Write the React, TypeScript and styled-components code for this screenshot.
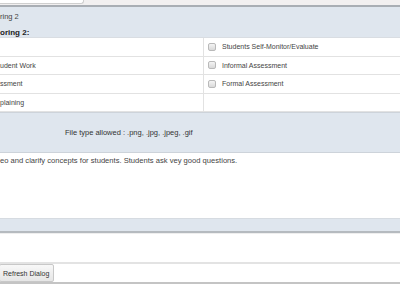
import React from "react";
import styled, { createGlobalStyle } from "styled-components";

const GlobalStyle = createGlobalStyle`
  body {
    margin: 0;
    background: #fff;
    font-family: "Liberation Sans", Arial, sans-serif;
    color: #333;
  }
`;

const rows = [
  { left: "", right: "Students Self-Monitor/Evaluate" },
  { left: "udent Work", right: "Informal Assessment" },
  { left: "ssment", right: "Formal Assessment" },
  { left: "plaining", right: "" },
];

const App: React.FC = () => {
  return (
    <Page>
      <GlobalStyle />
      <TopStrip>
        <Tab />
      </TopStrip>
      <Header>
        <HeaderLine>ring 2</HeaderLine>
        <HeaderLine bold>oring 2:</HeaderLine>
      </Header>
      <Table>
        {rows.map((r, i) => (
          <Row key={i}>
            <Cell>{r.left}</Cell>
            <Cell divided>
              {r.right && (
                <>
                  <Check />
                  <span>{r.right}</span>
                </>
              )}
            </Cell>
          </Row>
        ))}
      </Table>
      <Upload>
        <UploadNote>File type allowed : .png, .jpg, .jpeg, .gif</UploadNote>
      </Upload>
      <Comment>eo and clarify concepts for students. Students ask vey good questions.</Comment>
      <Band />
      <Blank />
      <Buttons>
        <Button>Refresh Dialog</Button>
      </Buttons>
    </Page>
  );
};

export default App;

const Page = styled.div`
  width: 400px;
  height: 284px;
  overflow: hidden;
  font-size: 7px;
`;

const TopStrip = styled.div`
  height: 5px;
  background: #f2f0f0;
  border-bottom: 2px solid #a9aeb4;
`;

const Tab = styled.div`
  width: 83px;
  height: 3px;
  background: #fff;
  border-right: 1px solid #cfcfcf;
  border-bottom: 1px solid #cfcfcf;
  border-bottom-right-radius: 3px;
`;

const Header = styled.div`
  height: 30px;
  background: #dfe6ee;
  display: flex;
  flex-direction: column;
  gap: 7px;
  padding-top: 5px;
  box-sizing: border-box;
`;

const HeaderLine = styled.div<{ bold?: boolean }>`
  font-size: ${(p) => (p.bold ? "8px" : "7.5px")};
  font-weight: ${(p) => (p.bold ? 700 : 400)};
  color: ${(p) => (p.bold ? "#222" : "#444")};
  line-height: ${(p) => (p.bold ? "8px" : "10px")};
`;

const Table = styled.div`
  border-top: 1px solid #d9dde2;
`;

const Row = styled.div`
  display: grid;
  grid-template-columns: 203px 1fr;
  height: 18.5px;
  box-sizing: border-box;
  border-bottom: 1px solid #e2e2e2;
`;

const Cell = styled.div<{ divided?: boolean }>`
  display: flex;
  align-items: center;
  gap: 6px;
  padding-left: ${(p) => (p.divided ? "4px" : "0")};
  border-left: ${(p) => (p.divided ? "1px solid #e2e2e2" : "none")};
  color: #444;
`;

const Check = styled.span`
  width: 6px;
  height: 6px;
  border: 1px solid #b9b9b9;
  border-radius: 2px;
  background: linear-gradient(#f4f4f4, #d9d9d9);
  flex-shrink: 0;
`;

const Upload = styled.div`
  height: 41px;
  box-sizing: border-box;
  background: #dfe6ee;
  border-top: 1px solid #cdd3da;
  border-bottom: 1px solid #cdd3da;
  display: flex;
  align-items: center;
  padding-left: 65px;
`;

const UploadNote = styled.span`
  color: #333;
  font-size: 7.5px;
`;

const Comment = styled.div`
  height: 65px;
  padding-top: 3px;
  box-sizing: border-box;
  color: #444;
  font-size: 7.6px;
`;

const Band = styled.div`
  height: 15px;
  box-sizing: border-box;
  background: #dfe6ee;
  border-top: 1px solid #d6dbe1;
  border-bottom: 2px solid #b5babf;
`;

const Blank = styled.div`
  height: 31px;
  box-sizing: border-box;
  border-top: 1px solid #eee;
  border-bottom: 2px solid #e3e3e3;
`;

const Buttons = styled.div`
  height: 20px;
  box-sizing: border-box;
  display: flex;
  align-items: center;
  border-bottom: 2px solid #c4c4c4;
`;

const Button = styled.button`
  font-family: inherit;
  font-size: 7px;
  color: #333;
  height: 18px;
  padding: 0 4px 0 3px;
  background: linear-gradient(#f8f8f8, #e6e6e6);
  border: 1px solid #c8c8c8;
  border-radius: 2px;
  margin-left: -1px;
`;
